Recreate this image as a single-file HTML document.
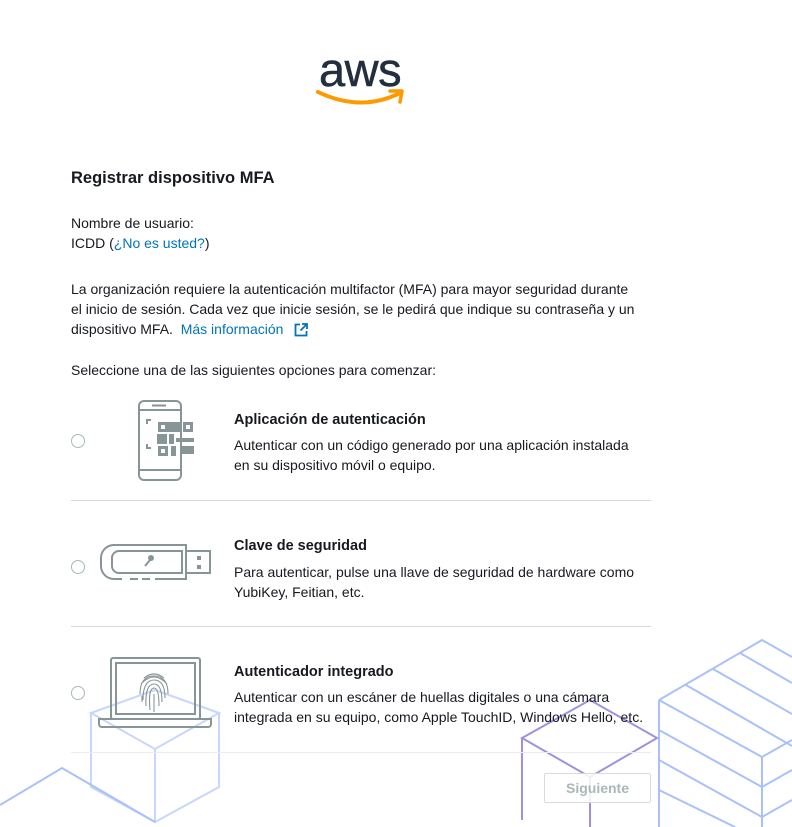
<!DOCTYPE html>
<html><head><meta charset="utf-8"><style>
html,body{margin:0;padding:0;background:#fff;width:792px;height:827px;overflow:hidden;position:relative;font-family:"Liberation Sans",Arial,sans-serif;color:#16191f}
.t{position:absolute;font-size:14px;line-height:20px;white-space:nowrap}
.b{font-weight:bold}
a{color:#0073bb;text-decoration:none}
.radio{position:absolute;left:71px;width:12px;height:12px;border:1px solid #aab7b8;border-radius:50%;background:#fff}
.hr{position:absolute;left:71px;width:580px;height:1px;background:#d5dbdb}
</style></head><body>
<svg style="position:absolute;left:0;top:0" width="792" height="827">
<g fill="none" stroke-width="2">
<g stroke="#c9d6fb">
<path d="M91 713 L155 690 L219 713 L155 749 Z M91 713 V787 L155 822 V749 M219 713 V787 L155 822"/>
</g>
<path d="M0 805 L62 768 L155 822" stroke="#a9c0fa"/>
<path d="M522 738 L590 700 L657 738 L590 777 Z M522 738 V820 M590 777 V827" stroke="#9b93df"/>
<g stroke="#a9c0fa">
<path d="M659 700 L762 640 L792 657 M659 700 V827 M659 700 L762 757 L792 740 M762 757 V827"/>
<path d="M686 685 L792 746 M713 669 L792 714 M740 653 L792 683 M659 730 L762 787 M659 760 L762 817 M659 790 L735 827 M762 787 L792 770 M762 817 L792 800"/>
</g>
</g>
</svg>
<div style="position:absolute;left:319px;top:44px;font-size:47px;color:#232f3e;letter-spacing:-0.5px;line-height:52px;-webkit-text-stroke:0.5px #232f3e">aws</div>
<svg style="position:absolute;left:316px;top:86px" width="92" height="24"><path d="M2 6 Q44 26 82 8" fill="none" stroke="#ff9900" stroke-width="4" stroke-linecap="round"/><path d="M74 5 L86 5 L84 16" fill="none" stroke="#ff9900" stroke-width="3.5" stroke-linecap="round" stroke-linejoin="round"/></svg>

<div class="t b" style="left:71px;top:168px;font-size:16.5px">Registrar dispositivo MFA</div>
<div class="t" style="left:71px;top:213px">Nombre de usuario:</div>
<div class="t" style="left:71px;top:233px">ICDD (<a>¿No es usted?</a>)</div>
<div class="t" style="left:71px;top:279px">La organización requiere la autenticación multifactor (MFA) para mayor seguridad durante</div>
<div class="t" style="left:71px;top:299px">el inicio de sesión. Cada vez que inicie sesión, se le pedirá que indique su contraseña y un</div>
<div class="t" style="left:71px;top:319px">dispositivo MFA. &nbsp;<a>Más información</a></div>
<svg style="position:absolute;left:294px;top:323px" width="14" height="14"><path d="M6 1.5H1.5V12.5H12.5V8 M8 1H13V6 M13 1L6.5 7.5" fill="none" stroke="#0073bb" stroke-width="1.8"/></svg>
<div class="t" style="left:71px;top:360px">Seleccione una de las siguientes opciones para comenzar:</div>

<div class="radio" style="top:434px"></div>
<svg style="position:absolute;left:135px;top:400px" width="65" height="83" fill="none" stroke="#879596" stroke-width="2">
<rect x="4" y="1" width="42" height="79" rx="5"/><path d="M4 10H46 M4 70H46 M17 5.5H31"/>
<path d="M16 20h-4v4 M12 44v4h4"/>
<g fill="#879596" stroke="none"><rect x="23" y="22" width="10" height="10"/><rect x="33" y="22" width="12" height="10"/><rect x="48" y="22" width="10" height="10"/><rect x="22" y="34" width="10" height="10"/><rect x="34" y="34" width="5" height="10"/><rect x="41" y="38" width="18" height="4"/><rect x="23" y="46" width="10" height="10"/><rect x="36" y="46" width="5" height="10"/><rect x="45" y="46" width="14" height="8"/></g>
<g fill="#fff" stroke="none"><rect x="26" y="25" width="4" height="4"/><rect x="51" y="25" width="4" height="4"/><rect x="26" y="49" width="4" height="4"/></g>
</svg>
<div class="t b" style="left:234px;top:410px;font-size:14.5px">Aplicación de autenticación</div>
<div class="t" style="left:234px;top:435px">Autenticar con un código generado por una aplicación instalada</div>
<div class="t" style="left:234px;top:455px">en su dispositivo móvil o equipo.</div>
<div class="hr" style="top:500px"></div>

<div class="radio" style="top:560px"></div>
<svg style="position:absolute;left:100px;top:544px" width="112" height="40" fill="none" stroke="#879596" stroke-width="2">
<path d="M55 35H86V1H14A13 13 0 0 0 1 14V22A13 13 0 0 0 14 35H22"/>
<path d="M19 7H82V29H19A7 7 0 0 1 12 22V14A7 7 0 0 1 19 7Z"/>
<rect x="86" y="7" width="24" height="22"/>
<path d="M30 35H38 M42 35H50"/>
<g fill="#879596" stroke="none"><rect x="97" y="12" width="4" height="4"/><rect x="97" y="21" width="4" height="4"/><circle cx="51" cy="14" r="3"/></g>
<path d="M50 16L45 22"/>
</svg>
<div class="t b" style="left:234px;top:536px;font-size:14.5px">Clave de seguridad</div>
<div class="t" style="left:234px;top:562px">Para autenticar, pulse una llave de seguridad de hardware como</div>
<div class="t" style="left:234px;top:582px">YubiKey, Feitian, etc.</div>
<div class="hr" style="top:626px"></div>

<div class="radio" style="top:686px"></div>
<svg style="position:absolute;left:98px;top:656px" width="114" height="74" fill="none" stroke="#879596" stroke-width="2">
<rect x="13" y="2" width="89" height="61" rx="2"/><rect x="18" y="7" width="79" height="51"/>
<path d="M1 63H113V68A3 3 0 0 1 110 71H4A3 3 0 0 1 1 68Z"/>
<g stroke-width="1.1"><path d="M46 22Q56 14 66 22 M43 28Q56 14 69 28 M42 38Q42 20 56 20Q70 20 70 38 M45 44Q45 24 56 24Q67 24 67 42 M48 50Q47 28 56 28Q64 28 64 46 M52 54Q50 32 56 32Q61 32 61 50 M56 56V38 M44 46V40"/></g>
</svg>
<div class="t b" style="left:234px;top:662px;font-size:14.5px">Autenticador integrado</div>
<div class="t" style="left:234px;top:687px">Autenticar con un escáner de huellas digitales o una cámara</div>
<div class="t" style="left:234px;top:707px">integrada en su equipo, como Apple TouchID, Windows Hello, etc.</div>
<div class="hr" style="top:752px;background:#eaeded"></div>

<div style="position:absolute;left:544px;top:773px;width:105px;height:28px;border:1px solid #d5dbdb;border-radius:2px;background:rgba(255,255,255,.85);color:#aab7b8;font-weight:bold;font-size:14px;line-height:28px;text-align:center">Siguiente</div>
</body></html>
